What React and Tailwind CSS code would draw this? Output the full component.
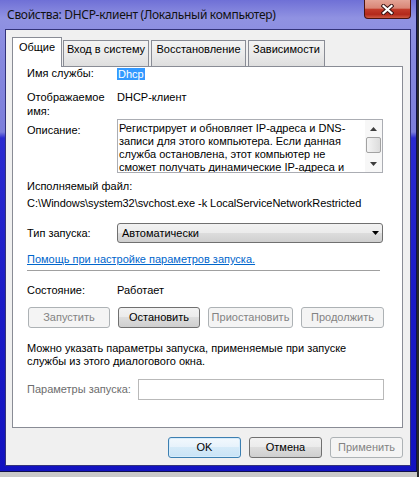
import React from 'react'

const DLG = "font-['Liberation_Sans',Arial,sans-serif] text-[11px] leading-[13px] text-black"

function Btn({ w, kind = 'normal', children }) {
  const look =
    kind === 'disabled'
      ? 'border-[#adb2b5] bg-[#f4f4f4] text-[#838383]'
      : kind === 'default'
      ? 'border-[#3c7fb1] bg-[linear-gradient(180deg,#f2f8fd_0%,#e6f2fb_50%,#d5eaf8_50%,#c9e3f6_100%)] text-black shadow-[inset_0_0_0_1px_#d6ecfb]'
      : 'border-[#707070] bg-[linear-gradient(180deg,#f2f2f2_0%,#ebebeb_50%,#dddddd_50%,#cfcfcf_100%)] text-black'
  return (
    <div className={`${w} h-[21px] flex items-center justify-center rounded-[3px] border ${look}`}>
      {children}
    </div>
  )
}

function Arrow({ up }) {
  return (
    <svg width="7" height="4" viewBox="0 0 7 4">
      <polygon points={up ? '3.5,0 7,4 0,4' : '0,0 7,0 3.5,4'} fill="#3d3d3d" />
    </svg>
  )
}

export default function App() {
  return (
    <div className="w-[419px] h-[477px] bg-[#c9c9c9] flex">
      {/* окно */}
      <div className="w-[417px] h-[472px] flex flex-col border-r border-b border-[#10104a] bg-[linear-gradient(180deg,#6f70d6_0px,#9092e2_18px,#8688de_60px,#7c7edb_132px,#2a2ad0_138px,#1a1ac6_300px,#1212c0_472px)]">
        {/* заголовок */}
        <div className="h-[29px] flex pl-[7px] pr-[5px]">
          <div className="self-center font-['Noto_Sans',sans-serif] text-[12px] leading-[16px] tracking-[-0.3px] text-[#111]">
            Свойства: DHCP-клиент (Локальный компьютер)
          </div>
          <div className="ml-auto w-[47px] h-[19px] rounded-b-[4px] border border-t-0 border-[#4a1410] bg-[linear-gradient(180deg,#e4a496_0%,#d98676_45%,#c23b2a_52%,#b3291b_80%,#cd5a44_100%)] flex items-center justify-center">
            <svg width="13" height="11" viewBox="0 0 13 11">
              <path d="M2.5 2 L10.5 9 M10.5 2 L2.5 9" stroke="#3a1414" strokeWidth="4.2" strokeLinecap="square" />
              <path d="M2.5 2 L10.5 9 M10.5 2 L2.5 9" stroke="#ffffff" strokeWidth="2.2" strokeLinecap="square" />
            </svg>
          </div>
        </div>

        {/* клиентская область */}
        <div className={`flex-1 ml-[5px] mr-[5px] mb-[5px] border border-[#33337a] bg-[#f0f0f0] flex flex-col ${DLG}`}>
          {/* вкладки */}
          <div className="h-[29px] mt-[7px] pl-[6px] flex items-end gap-[2px]">
            <div className="w-[50px] h-[30px] -mb-px -mr-[1px] relative z-10 bg-white border border-b-0 border-[#898c95] flex justify-center pt-[3px]">
              Общие
            </div>
            <div className="w-[86px] h-[26px] border border-b-0 border-[#898c95] bg-[linear-gradient(180deg,#f3f3f3_0%,#ebebeb_50%,#dedede_100%)] flex justify-center pt-[2px]">
              Вход в систему
            </div>
            <div className="w-[95px] h-[26px] border border-b-0 border-[#898c95] bg-[linear-gradient(180deg,#f3f3f3_0%,#ebebeb_50%,#dedede_100%)] flex justify-center pt-[2px]">
              Восстановление
            </div>
            <div className="w-[77px] h-[26px] border border-b-0 border-[#898c95] bg-[linear-gradient(180deg,#f3f3f3_0%,#ebebeb_50%,#dedede_100%)] flex justify-center pt-[2px]">
              Зависимости
            </div>
          </div>

          {/* страница */}
          <div className="h-[362px] ml-[6px] mr-[7px] border border-[#898c95] bg-white pl-[14px] pr-[18px] flex flex-col">
            <div className="flex h-[13px] items-center">
              <div className="w-[90px]">Имя службы:</div>
              <span className="bg-[#3399ff] text-white px-[1px] leading-[12px]">Dhcp</span>
            </div>

            <div className="flex mt-[10px] leading-[14px]">
              <div className="w-[90px]">
                Отображаемое
                <br />
                имя:
              </div>
              <div>DHCP-клиент</div>
            </div>

            <div className="flex mt-[1px]">
              <div className="w-[90px] pt-[5px]">Описание:</div>
              <div className="w-[266px] h-[54px] border border-[#abadb3] flex">
                <div className="flex-1 pl-[1px] pt-[2px] overflow-hidden whitespace-nowrap">
                  <div>Регистрирует и обновляет IP-адреса и DNS-</div>
                  <div>записи для этого компьютера. Если данная</div>
                  <div>служба остановлена, этот компьютер не</div>
                  <div>сможет получать динамические IP-адреса и</div>
                </div>
                <div className="w-[17px] bg-[#f7f7f7] flex flex-col">
                  <div className="h-[17px] flex items-center justify-center">
                    <Arrow up />
                  </div>
                  <div className="h-[18px] px-[1px]">
                    <div className="h-[16px] rounded-[2px] border border-[#a2a2a2] bg-[linear-gradient(90deg,#f4f4f4_0%,#e8e8e8_50%,#dcdcdc_100%)]" />
                  </div>
                  <div className="h-[17px] flex items-center justify-center">
                    <Arrow />
                  </div>
                </div>
              </div>
            </div>

            <div className="mt-[7px]">Исполняемый файл:</div>
            <div className="mt-[4px] whitespace-nowrap tracking-[-0.06px]">C:\Windows\system32\svchost.exe -k LocalServiceNetworkRestricted</div>

            <div className="flex items-center mt-[13px]">
              <div className="w-[90px]">Тип запуска:</div>
              <div className="w-[266px] h-[20px] rounded-[3px] border border-[#707070] bg-[linear-gradient(180deg,#f2f2f2_0%,#ebebeb_50%,#dddddd_50%,#cfcfcf_100%)] flex items-center pl-[4px] pr-[3px]">
                <span className="flex-1">Автоматически</span>
                <svg width="7" height="4" viewBox="0 0 7 4">
                  <polygon points="0,0 7,0 3.5,4" fill="#000" />
                </svg>
              </div>
            </div>

            <div className="mt-[10px]">
              <span className="text-[#0066cc] underline">Помощь при настройке параметров запуска.</span>
            </div>

            <div className="mt-[4px] h-px w-[353px] bg-[#a0a0a0]" />

            <div className="flex mt-[13px]">
              <div className="w-[90px]">Состояние:</div>
              <div>Работает</div>
            </div>

            <div className="flex mt-[10px] ml-[1px] gap-[8px]">
              <Btn w="w-[82px]" kind="disabled">Запустить</Btn>
              <Btn w="w-[82px]">Остановить</Btn>
              <Btn w="w-[85px]" kind="disabled">Приостановить</Btn>
              <Btn w="w-[83px]" kind="disabled">Продолжить</Btn>
            </div>

            <div className="mt-[14px] whitespace-nowrap">
              <div>Можно указать параметры запуска, применяемые при запуске</div>
              <div>службы из этого диалогового окна.</div>
            </div>

            <div className="flex items-center mt-[11px]">
              <div className="w-[111px] text-[#6d6d6d]">Параметры запуска:</div>
              <div className="w-[246px] h-[21px] border border-[#b9b9b9] bg-white" />
            </div>
          </div>

          {/* кнопки */}
          <div className="flex justify-end gap-[8px] mt-[9px] pr-[7px]">
            <Btn w="w-[73px]" kind="default">OK</Btn>
            <Btn w="w-[73px]">Отмена</Btn>
            <Btn w="w-[73px]" kind="disabled">Применить</Btn>
          </div>
        </div>
      </div>
      <div className="w-[2px] h-full bg-[#2a2a2a]" />
    </div>
  )
}
